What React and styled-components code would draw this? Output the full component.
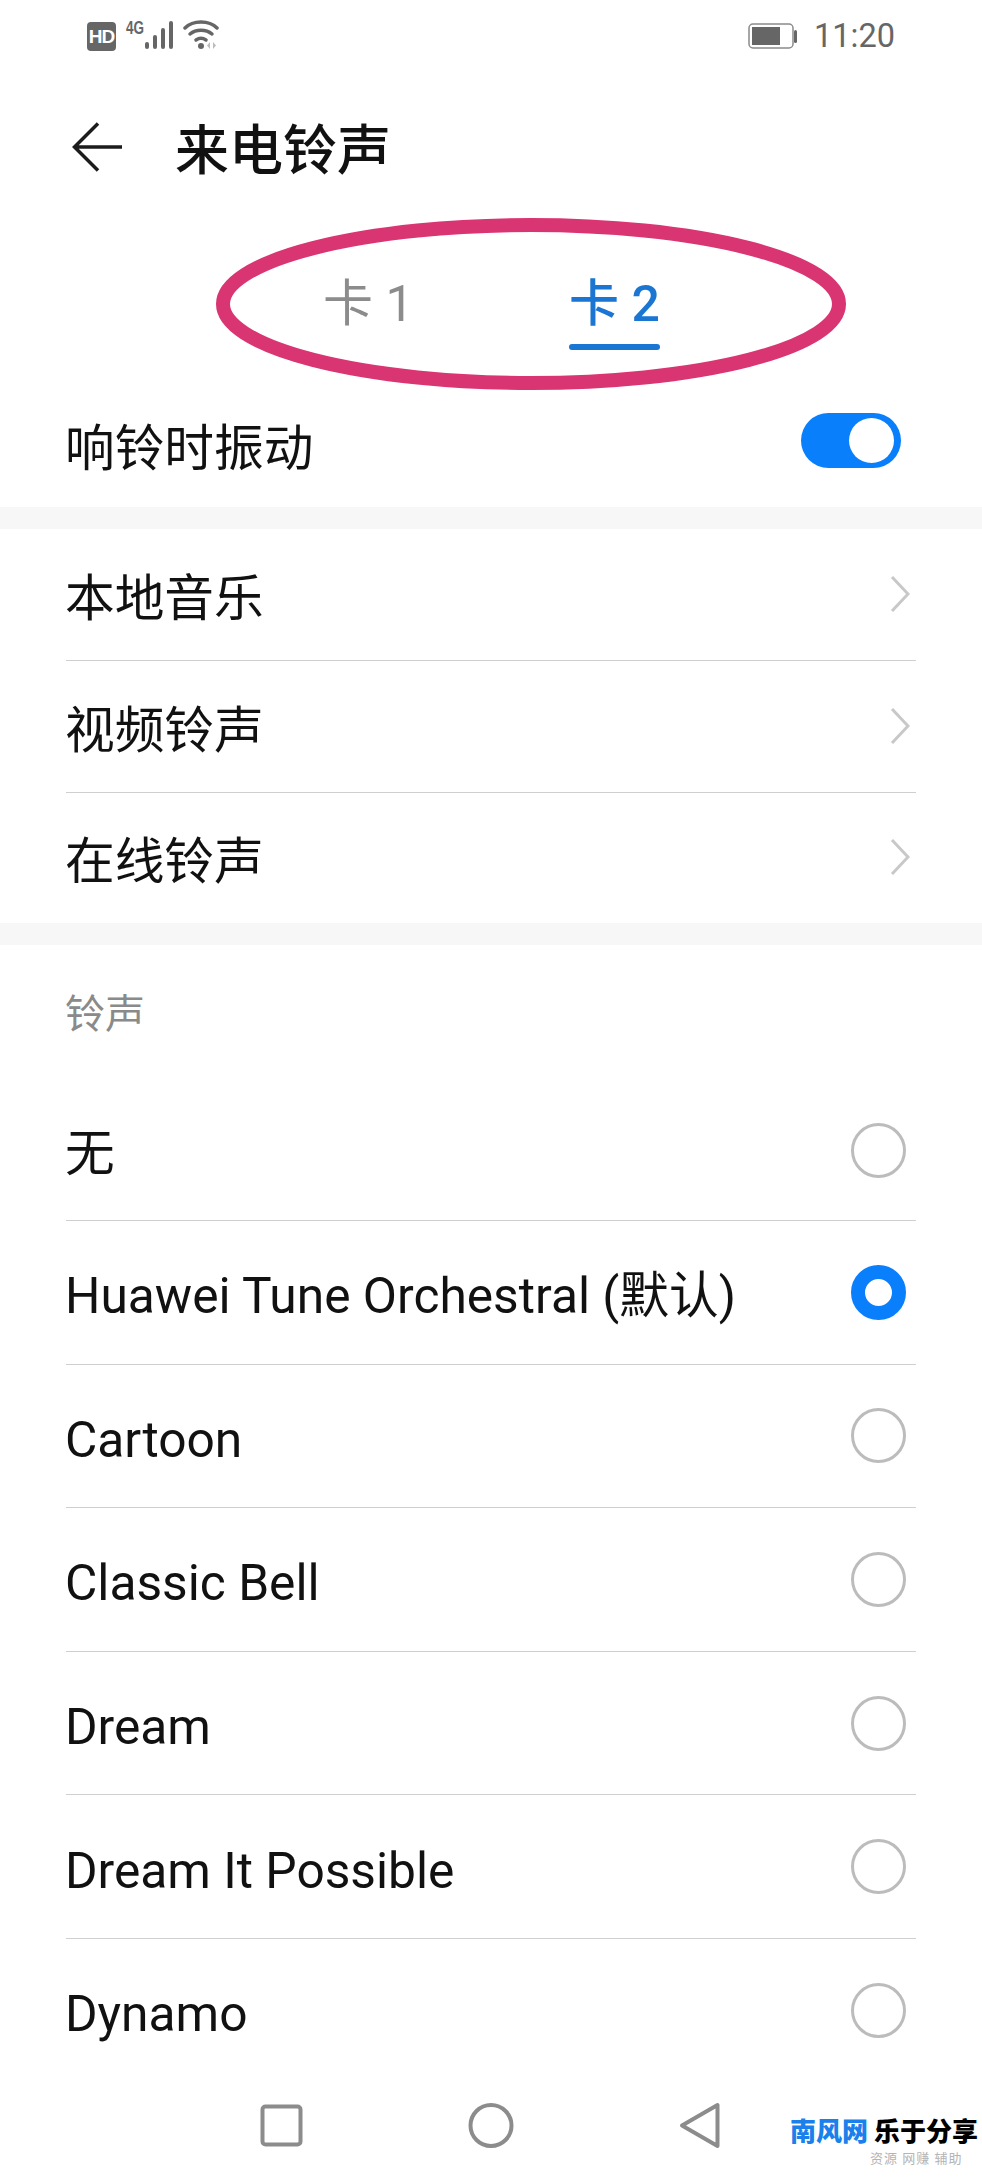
import React from 'react'
import styled, {createGlobalStyle} from 'styled-components'

const CJK = `Roboto, "Noto Sans CJK SC", sans-serif`
const blue = '#0a7ffb'

const GlobalStyle = createGlobalStyle`
  html, body { margin: 0; padding: 0; background: #fff; }
  body { font-family: ${CJK}; }
`

const Page = styled.div`
  position: relative;
  width: 982px;
  height: 2182px;
  display: flex;
  flex-direction: column;
  overflow: hidden;
  background: #fff;
  color: #111;
`

const StatusBar = styled.div`
  height: 72px;
  flex: none;
  display: flex;
  align-items: center;
  justify-content: space-between;
  padding: 0 87px 0 87px;
  color: #666;
`
const StatusGroup = styled.div`
  display: flex;
  align-items: center;
`
const HdBadge = styled.span`
  width: 29px;
  height: 29px;
  border-radius: 4px;
  background: #666;
  color: #fff;
  font: 700 19px/29px "Liberation Sans", sans-serif;
  letter-spacing: -1px;
  text-align: center;
`
const NetBlock = styled.div`
  position: relative;
  width: 50px;
  height: 32px;
  margin-left: 10px;
`
const NetLabel = styled.span`
  position: absolute;
  left: 0;
  top: -1px;
  font: 700 18px/18px "Liberation Sans", sans-serif;
  transform: scaleX(0.75);
  transform-origin: left top;
`
const Clock = styled.span`
  margin-left: 17px;
  font-size: 32.5px;
  line-height: 40px;
  color: #666;
`

const Header = styled.div`
  height: 150px;
  flex: none;
  display: flex;
  align-items: center;
  padding-left: 72px;
`
const Title = styled.h1`
  position: relative;
  top: 5px;
  margin: 0 0 0 53px;
  font-size: 54px;
  line-height: 64px;
  font-weight: 500;
  color: #111;
`

const Tabs = styled.div`
  position: relative;
  height: 161px;
  flex: none;
  display: flex;
  padding: 52px 0 0 323px;
  box-sizing: border-box;
`
const Tab = styled.div`
  width: 246px;
  font-size: 50px;
  line-height: 60px;
  font-weight: ${p => (p.$active ? 500 : 400)};
  color: ${p => (p.$active ? '#1a76d2' : '#8c8c8c')};
`
const TabLabel = styled.span`
  display: inline-block;
  position: relative;
`
const TabLine = styled.span`
  position: absolute;
  left: 0;
  right: 0;
  bottom: -16px;
  height: 6px;
  border-radius: 3px;
  background: #1a76d2;
`
const Ring = styled.svg`
  position: absolute;
  left: 213px;
  top: -6px;
`

const Row = styled.div`
  height: ${p => p.$height}px;
  box-sizing: border-box;
  flex: none;
  margin: 0 66px;
  display: flex;
  align-items: center;
  justify-content: space-between;
  border-bottom: ${p => (p.$line ? '1.5px solid #cfcfcf' : 'none')};
`
const RowText = styled.span`
  font-size: 49.7px;
  line-height: 60px;
  position: relative;
  top: 4px;
  left: -1px;
  color: #111;
  white-space: nowrap;
`
const Band = styled.div`
  height: 22px;
  flex: none;
  background: #f7f7f7;
`
const Toggle = styled.span`
  position: relative;
  top: -5px;
  width: 100px;
  height: 55px;
  margin-right: 15px;
  box-sizing: border-box;
  padding: 5px 7px 5px 0;
  display: flex;
  justify-content: flex-end;
  border-radius: 28px;
  background: ${blue};
`
const Knob = styled.span`
  width: 45px;
  height: 45px;
  border-radius: 50%;
  background: #fff;
`
const Chevron = styled.svg`
  margin-right: 6px;
  position: relative;
  top: -1px;
`
const SectionLabel = styled.div`
  height: 135px;
  flex: none;
  box-sizing: border-box;
  padding: 46px 0 0 65px;
  font-size: 40px;
  line-height: 48px;
  color: #8a8a8a;
`
const ListArea = styled.div`
  flex: 1;
  min-height: 0;
  overflow: hidden;
`
const Radio = styled.span`
  width: 55px;
  height: 55px;
  margin-right: 10px;
  box-sizing: border-box;
  border-radius: 50%;
  border: ${p => (p.$on ? `14px solid ${blue}` : '3px solid #bcbcbc')};
`

const NavBar = styled.div`
  position: relative;
  height: 122px;
  flex: none;
  background: #fff;
`
const NavIcon = styled.svg`
  position: absolute;
  left: ${p => p.$x}px;
  top: ${p => p.$y}px;
`
const Mark = styled.div`
  position: absolute;
  left: 790px;
  top: 56px;
  width: 192px;
`
const MarkTitle = styled.div`
  display: flex;
  font-size: 26px;
  line-height: 32px;
  font-weight: 900;
  color: #000;
  white-space: nowrap;
`
const MarkBlue = styled.span`
  color: #1a80ec;
  margin-right: 6px;
`
const MarkSub = styled.div`
  margin: 2px 0 0 80px;
  font-size: 13px;
  line-height: 18px;
  letter-spacing: 1px;
  color: #b4b4b4;
  white-space: nowrap;
`

const menuRows = ['本地音乐', '视频铃声', '在线铃声']
const tones = [
  {name: '无'},
  {name: 'Huawei Tune Orchestral (默认)', on: true},
  {name: 'Cartoon'},
  {name: 'Classic Bell'},
  {name: 'Dream'},
  {name: 'Dream It Possible'},
  {name: 'Dynamo'},
]

const StatusLeft = () => (
  <StatusGroup>
    <HdBadge>HD</HdBadge>
    <NetBlock>
      <NetLabel>4G</NetLabel>
      <svg width="50" height="32" viewBox="0 0 50 32">
        <g stroke="#666" strokeWidth="4" strokeLinecap="round">
          <path d="M21 24v3M29 17v10M37 10v17M45 3v24" />
        </g>
      </svg>
    </NetBlock>
    <svg width="36" height="32" viewBox="0 0 36 32" fill="none" style={{marginLeft: 7}}>
      <path d="M2 8C10 0 26 0 34 8" stroke="#666" strokeWidth="3.5" strokeLinecap="round" />
      <path d="M7 14c6-5 16-5 22 0" stroke="#666" strokeWidth="3.5" strokeLinecap="round" />
      <path d="M13 20c3-2 7-2 10 0" stroke="#666" strokeWidth="3.5" strokeLinecap="round" />
      <circle cx="18" cy="26" r="3" fill="#666" />
      <path d="M27 22l-3 3.500 3 3.500zM30 22l3 3.500-3 3.500z" fill="#bdbdbd" />
    </svg>
  </StatusGroup>
)

const StatusRight = () => (
  <StatusGroup>
    <svg width="49" height="26" viewBox="0 0 49 26" fill="none">
      <rect x="1" y="1" width="44" height="24" rx="4" stroke="#8a8a8a" strokeWidth="1.500" />
      <rect x="4" y="4" width="28" height="18" fill="#666" />
      <rect x="46" y="7" width="3" height="13" rx="1.500" fill="#666" />
    </svg>
    <Clock>11:20</Clock>
  </StatusGroup>
)

const NavButtons = () => (
  <>
    <NavIcon $x={260} $y={44} width="43" height="43" viewBox="0 0 43 43" fill="none">
      <rect x="2.500" y="2.500" width="38" height="38" rx="3" stroke="#8c8c8c" strokeWidth="4" />
    </NavIcon>
    <NavIcon $x={468} $y={42} width="46" height="47" viewBox="0 0 46 47" fill="none">
      <circle cx="23" cy="23.500" r="20.500" stroke="#8c8c8c" strokeWidth="4" />
    </NavIcon>
    <NavIcon $x={679} $y={42} width="41" height="47" viewBox="0 0 41 47" fill="none">
      <path d="M38.500 3v41L3 23.500z" stroke="#8c8c8c" strokeWidth="4" strokeLinejoin="round" />
    </NavIcon>
  </>
)

export default function App() {
  return (
    <Page>
      <GlobalStyle />
      <StatusBar>
        <StatusLeft />
        <StatusRight />
      </StatusBar>
      <Header>
        <svg width="50" height="50" viewBox="0 0 50 50" fill="none">
          <path d="M26 1.500L2.500 25 26 48.500M2.500 25H50" stroke="#1c1c1c" strokeWidth="3.500" />
        </svg>
        <Title>来电铃声</Title>
      </Header>
      <Tabs>
        <Tab><TabLabel>卡 1</TabLabel></Tab>
        <Tab $active><TabLabel>卡 2<TabLine /></TabLabel></Tab>
        <Ring width="640" height="180" viewBox="0 0 640 180" fill="none">
          <ellipse cx="318" cy="88" rx="308" ry="79" stroke="#da3573" strokeWidth="14" />
        </Ring>
      </Tabs>
      <Row $height={124}>
        <RowText>响铃时振动</RowText>
        <Toggle><Knob /></Toggle>
      </Row>
      <Band />
      {menuRows.map((label, i) => (
        <Row key={label} $height={i === 2 ? 130 : 132} $line={i < 2}>
          <RowText>{label}</RowText>
          <Chevron width="20" height="36" viewBox="0 0 20 36" fill="none">
            <path d="M2 1l16 17L2 35" stroke="#c8c8c8" strokeWidth="3" />
          </Chevron>
        </Row>
      ))}
      <Band />
      <SectionLabel>铃声</SectionLabel>
      <ListArea>
        {tones.map((t, i) => (
          <Row key={t.name} $height={i === 0 ? 141 : 143.6} $line>
            <RowText>{t.name}</RowText>
            <Radio $on={t.on} />
          </Row>
        ))}
      </ListArea>
      <NavBar>
        <NavButtons />
        <Mark>
          <MarkTitle><MarkBlue>南风网</MarkBlue>乐于分享</MarkTitle>
          <MarkSub>资源 网赚 辅助</MarkSub>
        </Mark>
      </NavBar>
    </Page>
  )
}
